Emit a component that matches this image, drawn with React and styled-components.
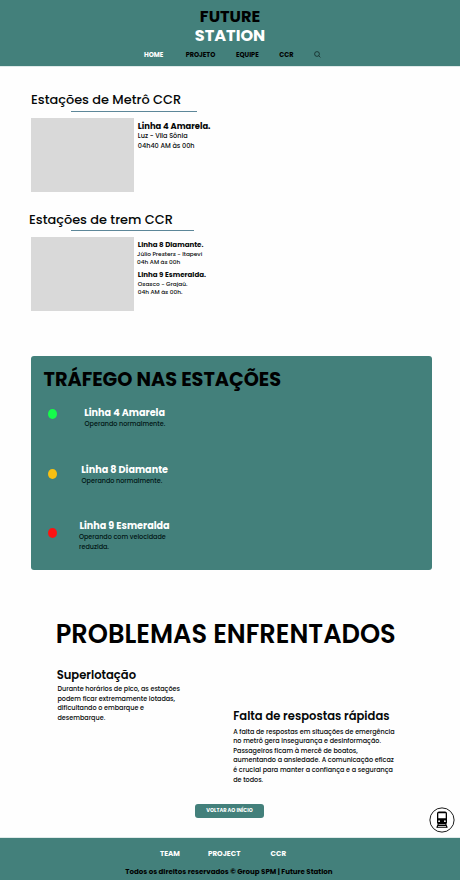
import React from 'react';
import styled, { createGlobalStyle } from 'styled-components';

const TEAL = '#43807b';

const GlobalStyle = createGlobalStyle`
  * { box-sizing: border-box; }
  body {
    margin: 0;
    background: #fefefe;
    color: #050808;
    font-family: Poppins, Inter, sans-serif;
    overflow-x: hidden;
  }
  h1, h2, h3, p { margin: 0; }
`;

const Page = styled.div`
  width: 460px;
  height: 880px;
  display: flex;
  flex-direction: column;
  overflow: hidden;
`;

const Header = styled.header`
  height: 66px;
  flex: none;
  padding-top: 6.5px;
  background: ${TEAL};
  display: flex;
  flex-direction: column;
  box-shadow: 0 1px 0 #dfeae9;
`;

const Brand = styled.h1`
  display: flex;
  flex-direction: column;
  align-items: center;
  font-size: 16.15px;
  font-weight: 700;
  line-height: 19px;
`;

const BrandWord = styled.span`
  color: ${(p) => (p.$light ? '#fff' : '#000')};
`;

const Nav = styled.nav`
  display: flex;
  align-items: center;
  height: 10px;
  margin: 5.5px 0 0 144px;
`;

const NavLink = styled.a`
  width: ${(p) => p.$width}px;
  font-size: 6.5px;
  font-weight: 700;
  line-height: 10px;
  color: ${(p) => (p.$active ? '#fff' : '#000')};
`;

const SearchIcon = styled.svg`
  width: 7px;
  height: 7px;
  display: block;
  margin-top: -1px;
  fill: none;
  stroke: #0b1c1b;
  stroke-width: 0.7;
`;

const Stations = styled.section`
  height: 145px;
  flex: none;
  padding: ${(p) => p.$top}px 0 0 31px;
`;

const StationsTitle = styled.h2`
  margin-left: ${(p) => p.$shift || 0}px;
  font-size: 12.9px;
  font-weight: 500;
  line-height: 18px;
  white-space: nowrap;
`;

const Underline = styled.div`
  width: ${(p) => p.$width}px;
  height: 1px;
  margin: ${(p) => p.$gap}px 0 6px 40px;
  background: #5d8799;
`;

const StationRow = styled.div`
  display: flex;
  gap: 3.8px;
`;

const Photo = styled.div`
  width: 103px;
  height: 74.4px;
  background: #d9d9d9;
`;

const StationInfo = styled.div`
  padding-top: 3.3px;
`;

const LineName = styled.h3`
  font-size: ${(p) => p.$size}px;
  font-weight: 700;
  line-height: 10px;
  margin-top: ${(p) => p.$gap || 0}px;
  white-space: nowrap;
`;

const LineDetail = styled.p`
  font-size: ${(p) => p.$size}px;
  font-weight: 500;
  line-height: ${(p) => p.$leading}px;
  margin-left: ${(p) => p.$shift || 0}px;
  white-space: nowrap;
`;

const TrafficCard = styled.section`
  width: 401px;
  height: 214px;
  flex: none;
  margin-left: 31px;
  padding: 11.5px 0 0 12.5px;
  border-radius: 3px;
  background: ${TEAL};
`;

const TrafficTitle = styled.h2`
  font-size: 19.27px;
  font-weight: 700;
  line-height: 24px;
  color: #000;
`;

const TrafficRow = styled.div`
  display: flex;
  height: 59px;
  padding-left: 4.9px;
`;

const StatusDot = styled.span`
  width: 9px;
  height: 10px;
  margin-top: ${(p) => p.$top}px;
  border-radius: 50%;
  background: ${(p) => p.$color};
`;

const TrafficText = styled.div`
  margin-left: ${(p) => p.$left}px;
  padding-top: ${(p) => p.$top}px;
`;

const TrafficLine = styled.h3`
  margin-left: ${(p) => p.$shift || 0}px;
  font-size: 9.65px;
  font-weight: 700;
  line-height: 12px;
  color: #fff;
`;

const TrafficStatus = styled.p`
  font-size: 6.43px;
  font-weight: 500;
  line-height: 9.5px;
  color: #001413;
`;

const Problems = styled.section`
  height: 234px;
  flex: none;
  padding: 48px 0 0 56.7px;
`;

const ProblemsTitle = styled.h2`
  margin-left: -1px;
  font-size: 25.7px;
  font-weight: 600;
  line-height: 32px;
  color: #000;
  white-space: nowrap;
`;

const ProblemColumns = styled.div`
  display: flex;
  gap: 50px;
  padding-top: 17.8px;
`;

const Problem = styled.article`
  width: ${(p) => p.$width}px;
  padding-top: ${(p) => p.$top || 0}px;
`;

const ProblemName = styled.h3`
  margin-bottom: ${(p) => p.$gap}px;
  font-size: 11.55px;
  font-weight: 600;
  line-height: 15px;
  white-space: nowrap;
`;

const ProblemText = styled.p`
  padding-left: ${(p) => p.$indent || 0}px;
  font-size: 6.44px;
  font-weight: 500;
  line-height: 9.6px;
  white-space: nowrap;
`;

const Actions = styled.div`
  position: relative;
  height: 34px;
  flex: none;
  padding-left: 195px;
`;

const BackButton = styled.button`
  width: 69px;
  height: 14px;
  display: block;
  padding: 0;
  border: 0;
  border-radius: 3px;
  background: ${TEAL};
  color: #fff;
  font: 700 5.1px/14px Poppins, Inter, sans-serif;
  text-align: center;
`;

const TrainBadge = styled.svg`
  position: absolute;
  right: 5px;
  top: 3px;
  width: 26px;
  height: 26px;
`;

const Footer = styled.footer`
  height: 42px;
  flex: none;
  padding-top: 11px;
  background: ${TEAL};
  box-shadow: 0 -1px 0 #dfeae9;
`;

const FooterLinks = styled.nav`
  display: flex;
  padding-left: 160px;
`;

const FooterLink = styled.a`
  width: ${(p) => p.$width}px;
  font-size: 7.15px;
  font-weight: 700;
  line-height: 10px;
  color: #fff;
`;

const Copyright = styled.p`
  padding: 7.5px 0 0 125.3px;
  font-size: 7.06px;
  font-weight: 700;
  line-height: 10px;
  color: #000;
  white-space: nowrap;
`;

export default function App() {
  return (
    <>
      <GlobalStyle />
      <Page>
        <Header>
          <Brand>
            <BrandWord>FUTURE</BrandWord>
            <BrandWord $light>STATION</BrandWord>
          </Brand>
          <Nav>
            <NavLink $active $width={41.7}>HOME</NavLink>
            <NavLink $width={50.3}>PROJETO</NavLink>
            <NavLink $width={43.3}>EQUIPE</NavLink>
            <NavLink $width={34.4}>CCR</NavLink>
            <SearchIcon viewBox="0 0 7 7">
              <circle cx="3" cy="3" r="2.4" />
              <path d="M4.8 4.8 6.4 6.4" />
            </SearchIcon>
          </Nav>
        </Header>

        <Stations $top={25}>
          <StationsTitle>Estações de Metrô CCR</StationsTitle>
          <Underline $width={126} $gap={2} />
          <StationRow>
            <Photo />
            <StationInfo>
              <LineName $size={8.4}>Linha 4 Amarela.</LineName>
              <LineDetail $size={6.5} $leading={9}>Luz - Vila Sônia</LineDetail>
              <LineDetail $size={6.5} $leading={12}>04h40 AM às 00h</LineDetail>
            </StationInfo>
          </StationRow>
        </Stations>

        <Stations $top={0}>
          <StationsTitle $shift={-2}>Estações de trem CCR</StationsTitle>
          <Underline $width={123} $gap={1} />
          <StationRow>
            <Photo />
            <StationInfo>
              <LineName $size={7.07}>Linha 8 Diamante.</LineName>
              <LineDetail $size={5.8} $leading={8.1} $shift={-0.7}>Júlio Presters - Itapevi</LineDetail>
              <LineDetail $size={5.8} $leading={8.1} $shift={-0.7}>04h AM às 00h</LineDetail>
              <LineName $size={7.07} $gap={3.4}>Linha 9 Esmeralda.</LineName>
              <LineDetail $size={5.8} $leading={8.1}>Osasco - Grajaú.</LineDetail>
              <LineDetail $size={5.8} $leading={8.1}>04h AM às 00h.</LineDetail>
            </StationInfo>
          </StationRow>
        </Stations>

        <TrafficCard>
          <TrafficTitle>TRÁFEGO NAS ESTAÇÕES</TrafficTitle>
          <TrafficRow>
            <StatusDot $color="#15fb4b" $top={17.5} />
            <TrafficText $left={27.2} $top={15.6}>
              <TrafficLine $shift={-0.4}>Linha 4 Amarela</TrafficLine>
              <TrafficStatus>Operando normalmente.</TrafficStatus>
            </TrafficText>
          </TrafficRow>
          <TrafficRow>
            <StatusDot $color="#f9c012" $top={18} />
            <TrafficText $left={24.2} $top={13.4}>
              <TrafficLine $shift={-0.3}>Linha 8 Diamante</TrafficLine>
              <TrafficStatus>Operando normalmente.</TrafficStatus>
            </TrafficText>
          </TrafficRow>
          <TrafficRow>
            <StatusDot $color="#fb1313" $top={18.5} />
            <TrafficText $left={21.6} $top={10.9}>
              <TrafficLine $shift={0.4}>Linha 9 Esmeralda</TrafficLine>
              <TrafficStatus>
                Operando com velocidade
                <br />
                reduzida.
              </TrafficStatus>
            </TrafficText>
          </TrafficRow>
        </TrafficCard>

        <Problems>
          <ProblemsTitle>PROBLEMAS ENFRENTADOS</ProblemsTitle>
          <ProblemColumns>
            <Problem $width={126.5}>
              <ProblemName $gap={1.2}>Superlotação</ProblemName>
              <ProblemText $indent={0.8}>
                Durante horários de pico, as estações
                <br />
                podem ficar extremamente lotadas,
                <br />
                dificultando o embarque e
                <br />
                desembarque.
              </ProblemText>
            </Problem>
            <Problem $width={170} $top={41}>
              <ProblemName $gap={2.9}>Falta de respostas rápidas</ProblemName>
              <ProblemText>
                A falta de respostas em situações de emergência
                <br />
                no metrô gera insegurança e desinformação.
                <br />
                Passageiros ficam à mercê de boatos,
                <br />
                aumentando a ansiedade. A comunicação eficaz
                <br />
                é crucial para manter a confiança e a segurança
                <br />
                de todos.
              </ProblemText>
            </Problem>
          </ProblemColumns>
        </Problems>

        <Actions>
          <BackButton>VOLTAR AO INÍCIO</BackButton>
          <TrainBadge viewBox="0 0 26 26">
            <circle cx="13" cy="13" r="12.1" fill="#fff" stroke="#000" strokeWidth="0.9" />
            <path
              fillRule="evenodd"
              d="M10 4.6h6a2 2 0 0 1 2 2v9a1.6 1.6 0 0 1-1.6 1.6H9.6A1.6 1.6 0 0 1 8 15.6v-9a2 2 0 0 1 2-2ZM9.3 6.3v5h7.4v-5ZM10.1 13.3a.9.9 0 1 0 0 1.8.9.9 0 0 0 0-1.8ZM15.9 13.3a.9.9 0 1 0 0 1.8.9.9 0 0 0 0-1.8Z"
            />
            <path
              d="M9.3 17 7.8 20.7M16.7 17l1.5 3.7M8.900 18.400h8.200M7.600 20.300h10.800"
              fill="none"
              stroke="#000"
              strokeWidth="1.1"
            />
          </TrainBadge>
        </Actions>

        <Footer>
          <FooterLinks>
            <FooterLink $width={48}>TEAM</FooterLink>
            <FooterLink $width={62.5}>PROJECT</FooterLink>
            <FooterLink $width={20}>CCR</FooterLink>
          </FooterLinks>
          <Copyright>Todos os direitos reservados © Group SPM | Future Station</Copyright>
        </Footer>
      </Page>
    </>
  );
}
